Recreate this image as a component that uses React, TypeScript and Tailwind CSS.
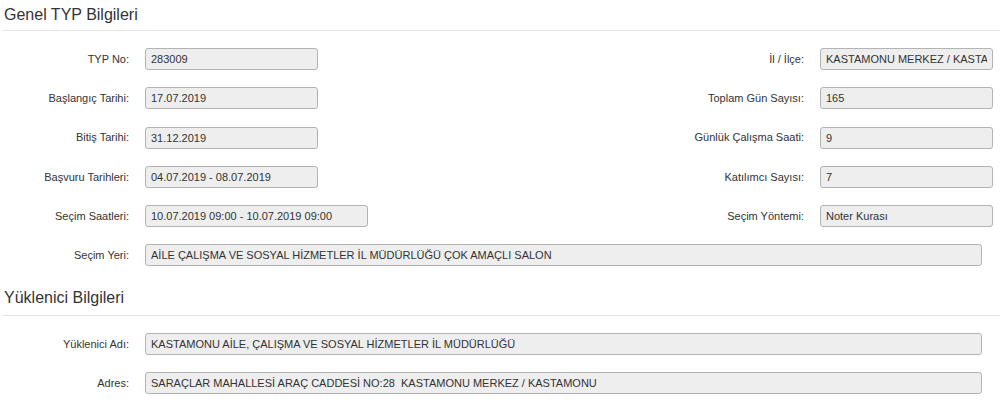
const font = { fontFamily: '"Liberation Sans", Arial, sans-serif' };

const Field = ({ value, w }: { value: string; w: string }) => (
  <div
    className={`${w} h-[22px] shrink-0 rounded-[3px] border border-[#b3b3b3] bg-[#eeeeee] px-[5px] text-[11px] leading-[20px] text-[#333]`}
  >
    <div className="overflow-hidden whitespace-pre">{value}</div>
  </div>
);

const Label = ({ text, w }: { text: string; w: string }) => (
  <div className={`${w} shrink-0 text-right text-[11px] text-[#333]`}>{text}</div>
);

const Row = ({
  l,
  lv,
  lw = "w-[173px]",
  r,
  rv,
}: {
  l: string;
  lv: string;
  lw?: string;
  r?: string;
  rv?: string;
}) => (
  <div className="flex items-center">
    <div className="flex w-[500px] shrink-0 items-center gap-[16px]">
      <Label text={l} w="w-[129px]" />
      <Field value={lv} w={lw} />
    </div>
    {r && (
      <div className="flex items-center gap-[16px]">
        <Label text={r} w="w-[304px]" />
        <Field value={rv ?? ""} w="w-[173px]" />
      </div>
    )}
  </div>
);

const Heading = ({ title, className }: { title: string; className: string }) => (
  <div className={`ml-[3px] border-b border-[#e5e5e5] pl-[1px] ${className}`}>
    <div className="h-[20px] text-[16px] leading-[20px] text-[#333]">{title}</div>
  </div>
);

export default function App() {
  return (
    <div className="h-[416px] w-[1000px] overflow-hidden bg-white" style={font}>
      <Heading title="Genel TYP Bilgileri" className="mt-[5px] pb-[5px]" />
      <div className="mt-[17px] flex flex-col gap-[17.3px]">
        <Row l="TYP No:" lv="283009" r="İl / İlçe:" rv="KASTAMONU MERKEZ / KASTAMONU" />
        <Row l="Başlangıç Tarihi:" lv="17.07.2019" r="Toplam Gün Sayısı:" rv="165" />
        <Row l="Bitiş Tarihi:" lv="31.12.2019" r="Günlük Çalışma Saati:" rv="9" />
        <Row l="Başvuru Tarihleri:" lv="04.07.2019 - 08.07.2019" r="Katılımcı Sayısı:" rv="7" />
        <Row
          l="Seçim Saatleri:"
          lv="10.07.2019 09:00 - 10.07.2019 09:00"
          lw="w-[223px]"
          r="Seçim Yöntemi:"
          rv="Noter Kurası"
        />
        <div className="flex items-center gap-[16px]">
          <Label text="Seçim Yeri:" w="w-[129px]" />
          <Field value="AİLE ÇALIŞMA VE SOSYAL HİZMETLER İL MÜDÜRLÜĞÜ ÇOK AMAÇLI SALON" w="w-[837px]" />
        </div>
      </div>
      <Heading title="Yüklenici Bilgileri" className="mt-[22px] pb-[6.5px]" />
      <div className="mt-[17px] flex flex-col gap-[17px]">
        <div className="flex items-center gap-[16px]">
          <Label text="Yüklenici Adı:" w="w-[129px]" />
          <Field value="KASTAMONU AİLE, ÇALIŞMA VE SOSYAL HİZMETLER İL MÜDÜRLÜĞÜ" w="w-[837px]" />
        </div>
        <div className="flex items-center gap-[16px]">
          <Label text="Adres:" w="w-[129px]" />
          <Field
            value="SARAÇLAR MAHALLESİ ARAÇ CADDESİ NO:28  KASTAMONU MERKEZ / KASTAMONU"
            w="w-[837px]"
          />
        </div>
      </div>
    </div>
  );
}
